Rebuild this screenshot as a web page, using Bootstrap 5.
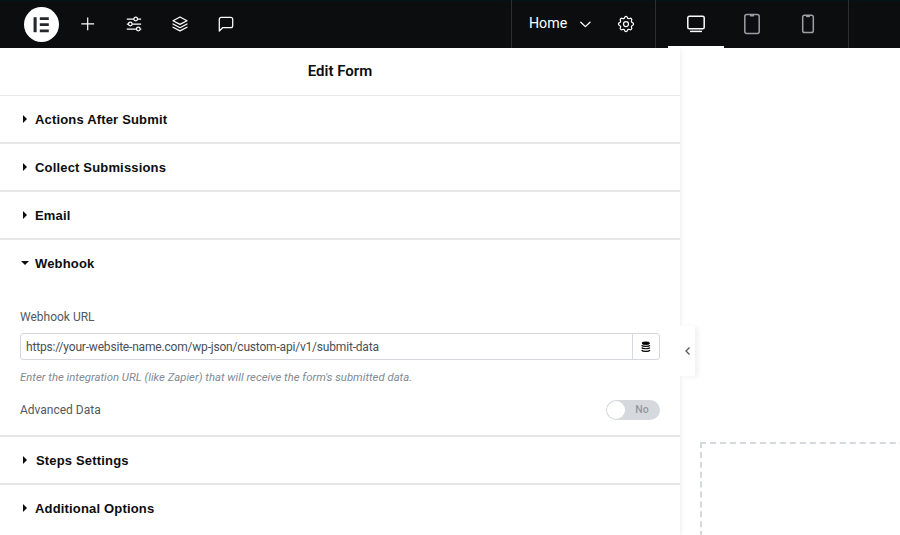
<!DOCTYPE html>
<html lang="en">
<head>
<meta charset="utf-8">
<meta name="viewport" content="width=device-width, initial-scale=1">
<title>Edit Form</title>
<link rel="stylesheet" href="https://cdn.jsdelivr.net/npm/bootstrap@5.3.0/dist/css/bootstrap.min.css">
<style>
body{font-family:Roboto,"Liberation Sans",sans-serif;font-size:12px;line-height:1;color:#515962;background:#fff}
svg{display:block;fill:none;stroke:currentColor}
.topbar{height:48px;background:#0c0d0e;box-shadow:inset 0 1px #04121c;color:#fff}
.topbar .btn{--bs-btn-color:#fff;--bs-btn-border-width:0;height:48px;border-radius:0}
.tool-btn{width:46px}
.tools{width:511px;padding-left:24px}
.brand{width:35px;height:35px;color:#25272a;margin-right:6px}
.doc{width:144px;border-left:1px solid #2d2e30}
.doc-name{font-size:14.2px;padding:0 0 1px 17px;box-sizing:content-box;width:39px}
.gear{margin-left:-4px}
.devices{width:194px;border-left:1px solid #2d2e30;border-right:1px solid #2d2e30;padding-left:12px}
.device{width:56px;color:#9da0a3!important}
.device.active{color:#fff!important;box-shadow:inset 0 -2px #fff}
.work{height:487px}
.side{width:680px;background:#fff;z-index:1;box-shadow:0 1px 5px rgba(0,0,0,.1)}
.side-title{height:48px;font-size:15px;font-weight:600;color:#0c0d0e;border-bottom:1px solid #e6e8ea;padding-bottom:2px}
.section{border-bottom:2px solid #e6e7e8}
.section-head{height:46px;padding:1px 0 0 20px;font:bold 13px "Liberation Sans",Arial,sans-serif;letter-spacing:.17px;color:#0c0d0e}
.section-head svg{width:10px;height:10px;margin:-2px 5px 0 0;fill:currentColor;stroke:none}
.section-head .steps-caret{margin-right:6px}
.section-body{height:149px;padding:25px 20px 0}
.url{height:27px;margin-top:10px}
.url .form-control{font-size:12px;color:#495057;border-color:#d5d8dc;border-radius:3px;padding:0 5px;letter-spacing:-.19px}
.url .btn{--bs-btn-border-color:#d5d8dc;--bs-btn-color:#000;width:28px;padding:0;border-radius:3px}
.hint{font-size:11.3px;line-height:11px;font-style:italic;color:#818a96;letter-spacing:.02px;margin:12px 0 17px}
.toggle{width:54px;height:20px;background:#d5d8dc;padding:1px;color:#9299a3;font-size:10.5px;font-weight:500}
.toggle-knob{width:18px;height:18px}
.canvas{padding:394px 0 0 20px}
.drop{width:1204px;height:204px;border:2px dashed #d5d8dc}
.collapse-tab{top:278px;left:680px;width:15px;height:50px;background:#fff;box-shadow:3px 1px 5px rgba(0,0,0,.06);z-index:2}
</style>
<script src="https://cdn.jsdelivr.net/npm/bootstrap@5.3.0/dist/js/bootstrap.bundle.min.js"></script>
</head>
<body class="overflow-hidden">
<header class="topbar d-flex">
  <div class="tools d-flex align-items-center">
    <div class="brand rounded-circle bg-white d-flex align-items-center justify-content-center">
      <svg width="35" height="35" viewBox="0 0 35 35"><path d="M11.1 10.2v15" stroke-width="3.1"/><path d="M15.8 11.6h9M15.8 17.7h9M15.8 23.8h9" stroke-width="2.8"/></svg>
    </div>
    <button class="btn tool-btn p-0 d-flex align-items-center justify-content-center" aria-label="Add"><svg width="20" height="20" viewBox="0 0 20 20" stroke-width="1.2"><path d="M9.7 3.4v12.8M3.3 9.8h12.8"/></svg></button>
    <button class="btn tool-btn p-0 d-flex align-items-center justify-content-center" aria-label="Site settings"><svg width="20" height="20" viewBox="0 0 20 20" stroke-width="1.25"><path d="M2.8 5h7.2M13.4 5h3.7M2.8 10h1.7M8.1 10h9M2.8 15h9.7M16.1 15h1.2"/><circle cx="11.7" cy="5" r="1.8"/><circle cx="6.3" cy="10" r="1.8"/><circle cx="14.3" cy="15" r="1.8"/></svg></button>
    <button class="btn tool-btn p-0 d-flex align-items-center justify-content-center" aria-label="Structure"><svg width="20" height="20" viewBox="0 0 20 20" stroke-width="1.25" stroke-linejoin="round" stroke-linecap="round"><path d="M10 3 17 6.7 10 10.4 3 6.7ZM3 10l7 3.7 7-3.7M3 13.2l7 3.7 7-3.7"/></svg></button>
    <button class="btn tool-btn p-0 d-flex align-items-center justify-content-center" aria-label="Notes"><svg width="20" height="20" viewBox="0 0 20 20" stroke-width="1.25" stroke-linejoin="round"><path d="M3.3 17V5.3a2 2 0 0 1 2-2h9.4a2 2 0 0 1 2 2v6.4a2 2 0 0 1-2 2H6.6Z"/></svg></button>
  </div>
  <div class="doc d-flex align-items-center">
    <div class="doc-name">Home</div>
    <svg class="ms-2 me-4" width="20" height="20" viewBox="0 0 20 20" stroke-width="1.3" stroke-linecap="round" stroke-linejoin="round"><path d="m4.8 8.2 4.6 4.4L14 8.2"/></svg>
    <svg class="gear" width="20" height="20" viewBox="0 0 24 24" stroke-width="1.5" stroke-linejoin="round"><path d="M10.3 4.3c.4-1.8 3-1.8 3.4 0a1.7 1.7 0 0 0 2.6 1.1c1.5-.9 3.3.8 2.4 2.4a1.7 1.7 0 0 0 1 2.5c1.8.5 1.8 3 0 3.5a1.7 1.7 0 0 0-1 2.5c.9 1.6-.9 3.3-2.4 2.4a1.7 1.7 0 0 0-2.6 1c-.4 1.8-3 1.8-3.4 0a1.7 1.7 0 0 0-2.6-1c-1.5.9-3.3-.8-2.4-2.4a1.7 1.7 0 0 0-1-2.5c-1.8-.5-1.8-3 0-3.5a1.7 1.7 0 0 0 1-2.5c-.9-1.6.9-3.3 2.4-2.4 1 .6 2.3.1 2.6-1.1Z"/><circle cx="12" cy="12" r="3"/></svg>
  </div>
  <div class="devices d-flex">
    <button class="btn device active p-0 d-flex align-items-center justify-content-center" aria-label="Desktop"><svg width="20" height="20" viewBox="0 0 20 20" stroke-width="1.5"><rect x="1.8" y="2.3" width="16.4" height="12.4" rx="1.5"/><path d="M4 17.4h12"/></svg></button>
    <button class="btn device p-0 d-flex align-items-center justify-content-center" aria-label="Tablet"><svg width="20" height="24" viewBox="0 0 20 24" stroke-width="1.5"><rect x="2.8" y="2.5" width="14.4" height="19" rx="2"/><path d="M8 3.7h4"/></svg></button>
    <button class="btn device p-0 d-flex align-items-center justify-content-center" aria-label="Mobile"><svg width="20" height="24" viewBox="0 0 20 24" stroke-width="1.5"><rect x="4.7" y="3.2" width="10.6" height="17.3" rx="1.8"/><path d="M8 4.4h4"/></svg></button>
  </div>
</header>
<main class="work d-flex position-relative overflow-hidden">
  <section class="side flex-shrink-0 position-relative">
    <h1 class="side-title d-flex align-items-center justify-content-center m-0">Edit Form</h1>
    <div class="section"><div class="section-head d-flex align-items-center"><svg viewBox="0 0 10 10"><path d="M3 1v8l4-4Z"/></svg>Actions After Submit</div></div>
    <div class="section"><div class="section-head d-flex align-items-center"><svg viewBox="0 0 10 10"><path d="M3 1v8l4-4Z"/></svg>Collect Submissions</div></div>
    <div class="section"><div class="section-head d-flex align-items-center"><svg viewBox="0 0 10 10"><path d="M3 1v8l4-4Z"/></svg>Email</div></div>
    <div class="section">
      <div class="section-head d-flex align-items-center"><svg viewBox="0 0 10 10"><path d="M1 3h8L5 7Z"/></svg>Webhook</div>
      <div class="section-body">
        <label for="url" class="d-block">Webhook URL</label>
        <div class="input-group url">
          <input id="url" class="form-control" value="https://your-website-name.com/wp-json/custom-api/v1/submit-data">
          <button class="btn d-flex align-items-center justify-content-center" aria-label="Dynamic tags"><svg width="10" height="12" viewBox="0 0 10 12"><ellipse cx="4.8" cy="2.2" rx="3.8" ry="1.2" fill="currentColor"/><path d="M.6 4.3c1 1.4 7.4 1.4 8.4 0M.6 6.7c1 1.4 7.4 1.4 8.4 0M.6 9.1c1 1.7 7.4 1.7 8.4 0" stroke-width="1.2"/></svg></button>
        </div>
        <p class="hint">Enter the integration URL (like Zapier) that will receive the form's submitted data.</p>
        <div class="d-flex align-items-center justify-content-between">
          <span>Advanced Data</span>
          <div class="toggle rounded-pill d-flex align-items-center"><span class="toggle-knob rounded-circle bg-white"></span><span class="flex-fill text-center">No</span></div>
        </div>
      </div>
    </div>
    <div class="section"><div class="section-head d-flex align-items-center"><svg class="steps-caret" viewBox="0 0 10 10"><path d="M3 1v8l4-4Z"/></svg>Steps Settings</div></div>
    <div class="section-head d-flex align-items-center"><svg viewBox="0 0 10 10"><path d="M3 1v8l4-4Z"/></svg>Additional Options</div>
  </section>
  <div class="canvas flex-shrink-0"><div class="drop"></div></div>
  <div class="collapse-tab position-absolute d-flex align-items-center justify-content-center"><svg width="8" height="10" viewBox="0 0 8 10" stroke-width="1.3"><path d="M5.5 1.5 2 5l3.5 3.5"/></svg></div>
</main>
</body>
</html>
